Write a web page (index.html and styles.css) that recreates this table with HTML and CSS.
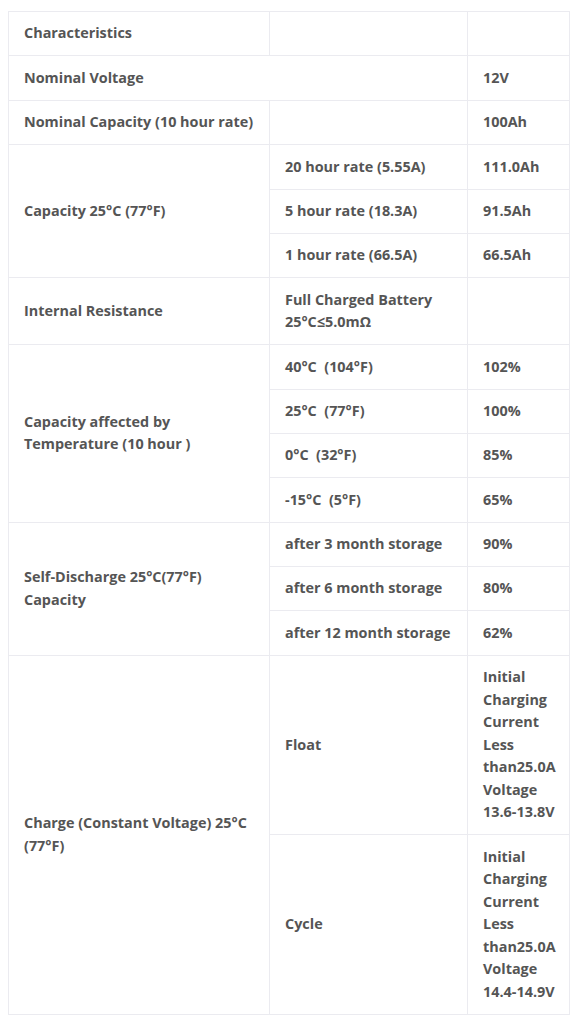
FILE: index.html
```html
<!DOCTYPE html>
<html>
<head>
<meta charset="utf-8">
<link rel="stylesheet" href="styles.css">
</head>
<body>
<table class="spec">
  <colgroup>
    <col class="c1">
    <col class="c2">
    <col class="c3">
  </colgroup>
  <tbody>
    <tr><td>Characteristics</td><td></td><td></td></tr>
    <tr><td colspan="2">Nominal Voltage</td><td>12V</td></tr>
    <tr><td>Nominal Capacity (10 hour rate)</td><td></td><td>100Ah</td></tr>
    <tr><td rowspan="3">Capacity 25°C (77°F)</td><td>20 hour rate (5.55A)</td><td>111.0Ah</td></tr>
    <tr><td>5 hour rate (18.3A)</td><td>91.5Ah</td></tr>
    <tr><td>1 hour rate (66.5A)</td><td>66.5Ah</td></tr>
    <tr><td>Internal Resistance</td><td>Full Charged Battery 25°C≤5.0mΩ</td><td></td></tr>
    <tr><td rowspan="4">Capacity affected by Temperature (10 hour )</td><td>40°C&nbsp; (104°F)</td><td>102%</td></tr>
    <tr><td>25°C&nbsp; (77°F)</td><td>100%</td></tr>
    <tr><td>0°C&nbsp; (32°F)</td><td>85%</td></tr>
    <tr><td>-15°C&nbsp; (5°F)</td><td>65%</td></tr>
    <tr><td rowspan="3">Self-Discharge 25°C(77°F) Capacity</td><td>after 3 month storage</td><td>90%</td></tr>
    <tr><td>after 6 month storage</td><td>80%</td></tr>
    <tr><td>after 12 month storage</td><td>62%</td></tr>
    <tr><td rowspan="2">Charge (Constant Voltage) 25°C (77°F)</td><td>Float</td><td>Initial Charging Current Less than25.0A Voltage 13.6-13.8V</td></tr>
    <tr><td>Cycle</td><td>Initial Charging Current Less than25.0A Voltage 14.4-14.9V</td></tr>
  </tbody>
</table>
</body>
</html>
```
FILE: styles.css
```css
html, body {
  margin: 0;
  padding: 0;
  background: #ffffff;
}
body {
  padding: 11px 8px;
  font-family: "Open Sans", "Liberation Sans", sans-serif;
  font-size: 14.4px;
  font-weight: 700;
  color: #555555;
}
.spec {
  width: 561px;
  border-collapse: collapse;
  table-layout: fixed;
}
.spec .c1 { width: 261px; }
.spec .c2 { width: 198px; }
.spec .c3 { width: 102px; }
.spec td {
  border: 1px solid #ebebf0;
  padding: 10.45px 15px;
  line-height: 22.5px;
  vertical-align: middle;
  text-align: left;
}
.spec td:last-child {
  padding-right: 8px;
}
```
